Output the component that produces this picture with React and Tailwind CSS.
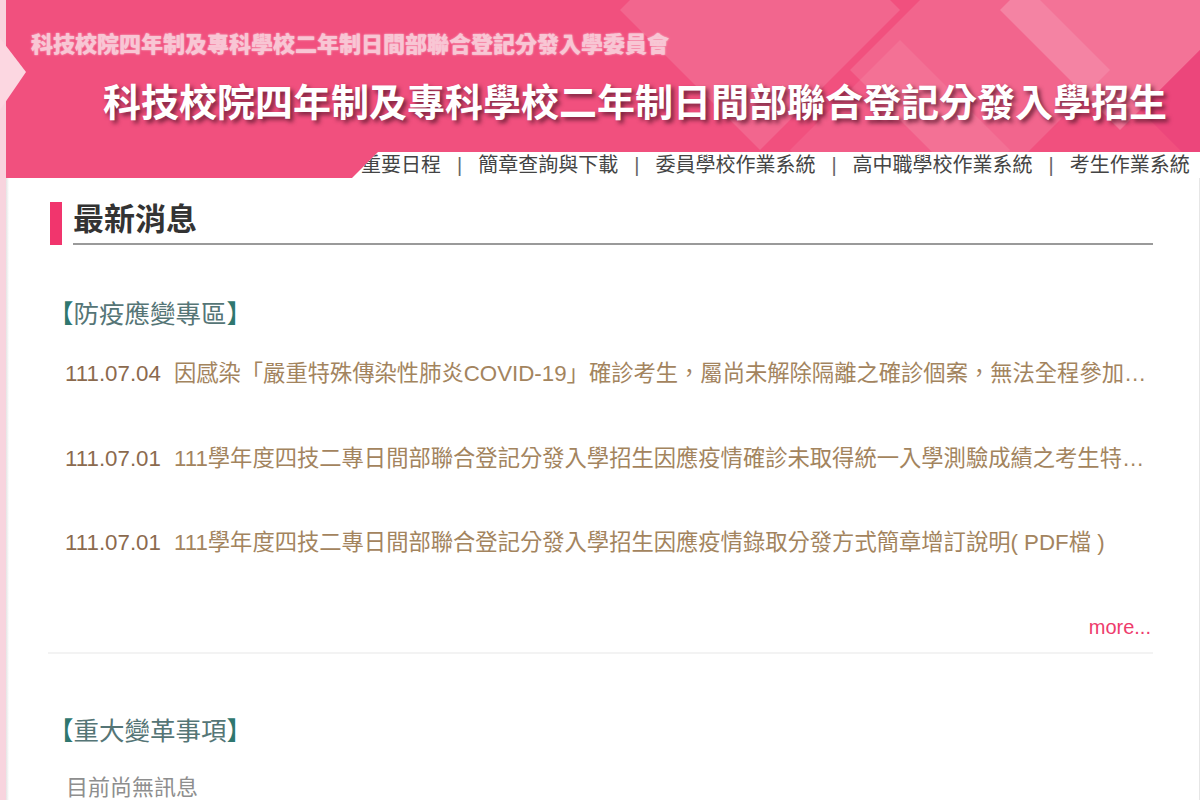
const navLinks = ['重要日程', '簡章查詢與下載', '委員學校作業系統', '高中職學校作業系統', '考生作業系統'];

const news = [
  {
    date: '111.07.04',
    title: '因感染「嚴重特殊傳染性肺炎COVID-19」確診考生，屬尚未解除隔離之確診個案，無法全程參加指定科目考試之替代措施說明',
  },
  {
    date: '111.07.01',
    title: '111學年度四技二專日間部聯合登記分發入學招生因應疫情確診未取得統一入學測驗成績之考生特別處理措施',
  },
  {
    date: '111.07.01',
    title: '111學年度四技二專日間部聯合登記分發入學招生因應疫情錄取分發方式簡章增訂說明( PDF檔 )',
  },
];

function SectionTitle({ children }) {
  return (
    <div className="text-[25.5px] leading-[35px] text-[#557576]">
      <span className="text-[#2f776f]">【</span>
      {children}
      <span className="text-[#2f776f]">】</span>
    </div>
  );
}

function Banner() {
  return (
    <header className="relative h-[178px] bg-[#f1507e] overflow-hidden">
      {/* background diamonds */}
      <svg className="absolute inset-0" width="1200" height="178" viewBox="0 0 1200 178">
        <polygon points="760,-130 900,10 760,150 620,10" fill="#ffffff" opacity="0.13" />
        <polygon points="980,-60 1110,70 980,200 850,70" fill="#ffffff" opacity="0.12" />
        <polygon points="1120,-110 1240,10 1120,130 1000,10" fill="#ffffff" opacity="0.2" />
        <polygon points="900,40 1010,150 900,260 790,150" fill="#ffffff" opacity="0.08" />
        <polygon points="1200,50 1260,110 1200,170 1140,110" fill="#e9407a" opacity="0.6" />
        <rect x="0" y="0" width="6" height="178" fill="#f9d2dd" />
        <polygon points="0,38 26,72 0,110" fill="#fcd7e1" />
      </svg>

      <div className="relative flex flex-col h-full">
        <div className="ml-[31px] mt-[32px] text-[22px] leading-[26px] font-black text-[#f8c6d4] whitespace-nowrap [text-shadow:0_0_2px_rgba(255,255,255,0.7)]">
          科技校院四年制及專科學校二年制日間部聯合登記分發入學委員會
        </div>
        <div className="ml-[103px] mt-[22px] text-[38px] leading-[46px] font-bold text-white whitespace-nowrap [text-shadow:3px_3px_4px_rgba(80,20,40,0.75)]">
          科技校院四年制及專科學校二年制日間部聯合登記分發入學招生
        </div>

        <nav className="mt-auto ml-auto w-[848px] h-[26px] bg-white pl-[9px] flex items-center text-[20px] leading-[26px] text-[#444] whitespace-nowrap [clip-path:polygon(26px_0,100%_0,100%_100%,0_100%)]">
          {navLinks.map((link, i) => (
            <span key={link} className="flex items-center">
              {i > 0 && <span className="mx-4 text-[#666]">|</span>}
              <a href="#" className="text-[#444] no-underline">{link}</a>
            </span>
          ))}
        </nav>
      </div>
    </header>
  );
}

export default function App() {
  return (
    <div className="min-h-screen bg-white overflow-x-hidden font-['Liberation_Sans','Noto_Sans_CJK_TC',sans-serif]">
      <Banner />

      <div className="flex">
        {/* left edge strip */}
        <div className="w-[6px] shrink-0 bg-[#f8d4de]" />
        <div className="w-[3px] shrink-0 bg-gradient-to-r from-[#e4e4e4] to-white" />

        <main className="flex-1 min-w-0 pl-[39px] pr-[46px] border-r border-[#e6e6e6]">
          {/* 最新消息 */}
          <div className="mt-[24px] flex">
            <div className="ml-[2px] w-[12px] h-[43px] bg-[#f1356d] shrink-0" />
            <div className="ml-[11px] flex-1 border-b-2 border-[#9a9a9a] pb-[5px]">
              <h2 className="text-[31px] leading-[36px] font-bold text-[#333]">最新消息</h2>
            </div>
          </div>

          <div className="mt-[52px]">
            <SectionTitle>防疫應變專區</SectionTitle>
          </div>

          <ul className="mt-[27px] flex flex-col gap-[54.5px]">
            {news.map((item, i) => (
              <li key={i} className="flex min-w-0 pl-[17px] text-[22.3px] leading-[30px]">
                <span className="shrink-0 text-[#8b6a4e]">{item.date}</span>
                <a href="#" className="ml-[13px] min-w-0 truncate text-[#a3845e] no-underline">{item.title}</a>
              </li>
            ))}
          </ul>

          <div className="mt-[54px] flex justify-end">
            <a href="#" className="mr-[2px] text-[20px] leading-[30px] text-[#ee3b6c] no-underline">more...</a>
          </div>

          <div className="mt-[10px] border-t-2 border-[#f3f3f3]" />

          <div className="mt-[60px]">
            <SectionTitle>重大變革事項</SectionTitle>
          </div>

          <p className="mt-[24px] pl-[18px] text-[22px] leading-[30px] text-[#8e8e8e]">目前尚無訊息</p>
          <div className="h-[60px]" />
        </main>
      </div>
    </div>
  );
}
